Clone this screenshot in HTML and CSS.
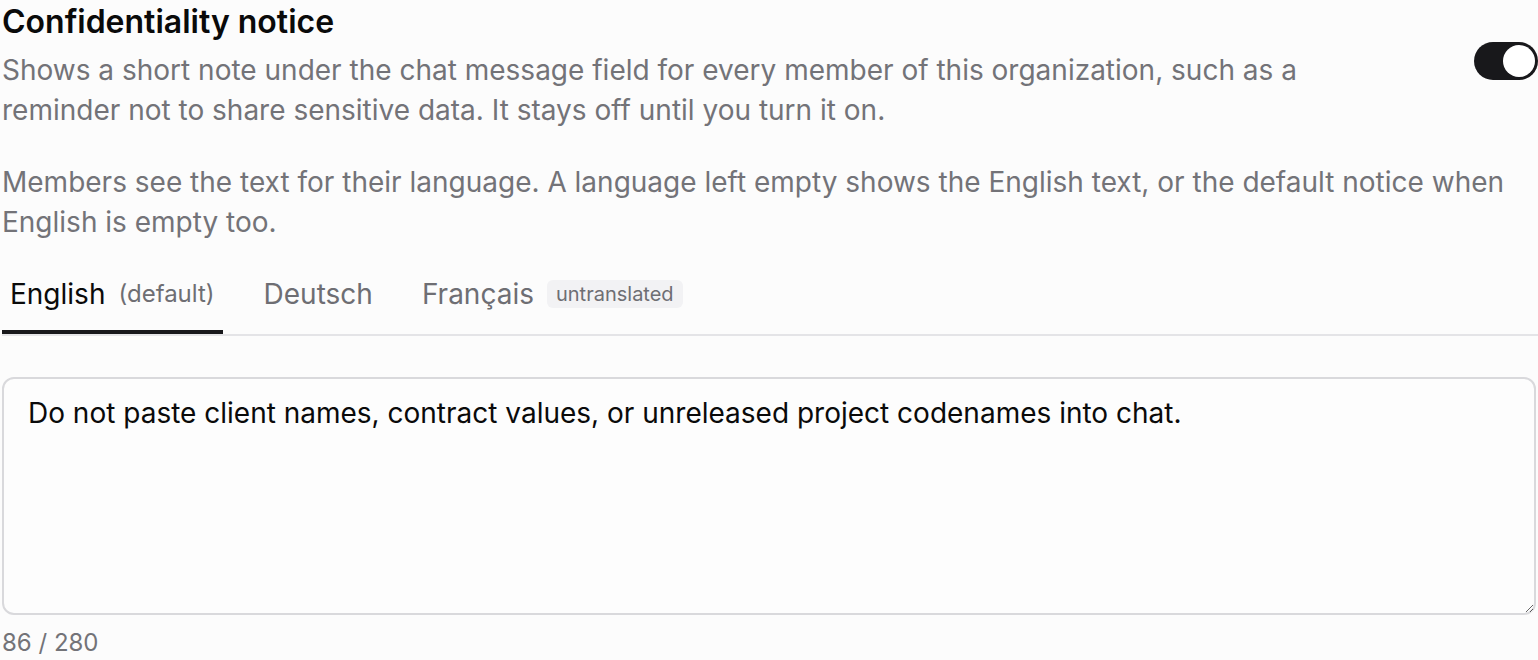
FILE: index.html
```html
<!DOCTYPE html>
<html lang="en">
<head>
<meta charset="utf-8">
<title>Confidentiality notice</title>
<link rel="stylesheet" href="styles.css">
</head>
<body>
<main class="setting">
  <div class="setting-head">
    <div class="setting-text">
      <h2 class="setting-title">Confidentiality notice</h2>
      <p class="setting-desc">Shows a short note under the chat message field for every member of this organization, such as a reminder not to share sensitive data. It stays off until you turn it on.</p>
    </div>
    <button class="toggle is-on" role="switch" aria-checked="true" aria-label="Confidentiality notice"><span class="toggle-knob"></span></button>
  </div>
  <p class="setting-note">Members see the text for their language. A language left empty shows the English text, or the default notice when English is empty too.</p>
  <div class="tabs" role="tablist">
    <button class="tab is-active" role="tab">English <span class="tab-meta">(default)</span></button>
    <button class="tab" role="tab">Deutsch</button>
    <button class="tab" role="tab">Français <span class="tab-badge">untranslated</span></button>
  </div>
  <textarea class="notice-input" rows="6">Do not paste client names, contract values, or unreleased project codenames into chat.</textarea>
  <div class="counter">86 / 280</div>
</main>
</body>
</html>
```
FILE: styles.css
```css
* { box-sizing: border-box; }
html, body { margin: 0; padding: 0; background: #fcfcfc; }
body {
  font-family: Inter, "Noto Sans", "Liberation Sans", sans-serif;
  color: #0a0a0a;
  overflow: hidden;
}
.setting { padding: 0 2px 0 2px; }
.setting-head { display: flex; gap: 24px; }
.setting-text { flex: 1; padding-right: 120px; }
.setting-title {
  margin: 0;
  font-size: 32px;
  line-height: 44px;
  font-weight: 600;
}
.setting-desc, .setting-note {
  margin: 6px 0 0;
  font-size: 28px;
  line-height: 40px;
  color: #737378;
}
.setting-note { margin-top: 32px; }
.toggle {
  flex: none;
  margin-top: 42px;
  margin-right: -2px;
  width: 64px;
  height: 38px;
  border: none;
  border-radius: 19px;
  background: #18181b;
  padding: 3px;
  display: flex;
  justify-content: flex-end;
  cursor: pointer;
}
.toggle-knob {
  width: 32px;
  height: 32px;
  border-radius: 50%;
  background: #fff;
}
.tabs {
  display: flex;
  gap: 33px;
  margin: 20px -2px 0 0;
  border-bottom: 2px solid #e4e4e7;
}
.tab {
  font: inherit;
  background: none;
  border: none;
  border-bottom: 4px solid transparent;
  padding: 14px 8px 18px;
  font-size: 28px;
  line-height: 36px;
  color: #6e6e73;
  display: flex;
  align-items: center;
  gap: 13px;
  cursor: pointer;
}
.tab.is-active { color: #0a0a0a; border-bottom-color: #18181b; }
.tab-meta { font-size: 24px; color: #6e6e73; }
.tab-badge {
  font-size: 20px;
  line-height: 28px;
  padding: 0 9px;
  border-radius: 6px;
  background: #f2f2f4;
  color: #6e6e73;
}
.notice-input {
  display: block;
  width: 100%;
  height: 238px;
  margin-top: 41px;
  border: 2px solid #d9d9dc;
  border-radius: 12px;
  background: #fdfdfd;
  padding: 16px 24px;
  font: inherit;
  font-size: 28px;
  line-height: 36px;
  color: #0a0a0a;
  resize: vertical;
  outline: none;
}
.counter {
  margin-top: 10px;
  font-size: 24px;
  line-height: 36px;
  color: #737378;
}
```
